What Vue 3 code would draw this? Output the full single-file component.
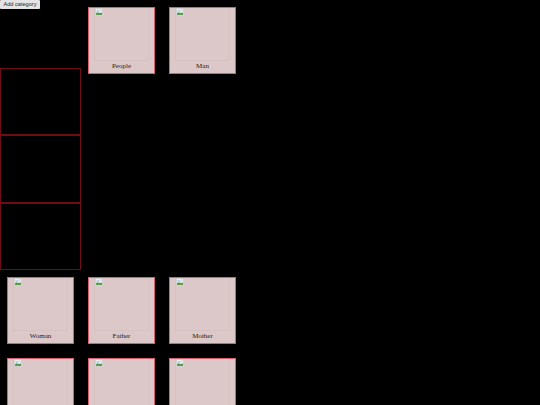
<script setup>
const sideCards = ['People', 'Man']
const rows = [
  ['Woman', 'Father', 'Mother'],
  ['', '', '']
]
</script>

<template>
  <div class="page">
    <button class="add">Add category</button>
    <div class="top">
      <div class="stack">
        <div class="empty"></div>
        <div class="empty"></div>
        <div class="empty"></div>
      </div>
      <div v-for="name in sideCards" :key="name" class="cell">
        <div class="card">
          <div class="pic">
            <svg class="broken" viewBox="0 0 16 16">
              <path d="M1 1h10l4 4v10H1z" fill="#eef1f4" stroke="#c4c6c8" stroke-width="1" />
              <path d="M11 1v4h4" fill="#fff" stroke="#c4c6c8" stroke-width="1" />
              <path d="M2 11c2-3 4-3 6-1l6-1v5H2z" fill="#5a9c4e" />
              <path d="M3 4h6v4H3z" fill="#bcd4ee" />
            </svg>
          </div>
          <span class="label">{{ name }}</span>
        </div>
      </div>
    </div>
    <div v-for="(row, r) in rows" :key="r" class="row">
      <div v-for="(name, c) in row" :key="c" class="cell">
        <div class="card">
          <div class="pic">
            <svg class="broken" viewBox="0 0 16 16">
              <path d="M1 1h10l4 4v10H1z" fill="#eef1f4" stroke="#c4c6c8" stroke-width="1" />
              <path d="M11 1v4h4" fill="#fff" stroke="#c4c6c8" stroke-width="1" />
              <path d="M2 11c2-3 4-3 6-1l6-1v5H2z" fill="#5a9c4e" />
              <path d="M3 4h6v4H3z" fill="#bcd4ee" />
            </svg>
          </div>
          <span class="label">{{ name }}</span>
        </div>
      </div>
    </div>
  </div>
</template>

<style scoped>
.page {
  position: relative;
  width: 540px;
  height: 405px;
  overflow: hidden;
  background: #000;
  font-family: "Liberation Serif", serif;
}
.add {
  position: absolute;
  left: 0;
  top: 0;
  width: 40px;
  height: 9px;
  padding: 0;
  border: 0;
  border-radius: 1px;
  background: #e4e4e4;
  color: #222;
  font-family: "Liberation Sans", sans-serif;
  font-size: 5.6px;
  line-height: 9px;
}
.top {
  display: flex;
  height: 270px;
  align-items: flex-start;
}
.stack {
  display: flex;
  flex-direction: column;
  width: 81px;
  padding-top: 67.5px;
  box-sizing: border-box;
}
.empty {
  height: 67.5px;
  box-sizing: border-box;
  border: 1px solid #6e0c18;
}
.row {
  display: flex;
  height: 81px;
}
.cell {
  width: 81px;
  height: 81px;
  padding: 7px;
  box-sizing: border-box;
  flex: none;
}
.card {
  width: 67px;
  height: 67px;
  box-sizing: border-box;
  border: 1px solid #d9606c;
  background: #dcc8c8;
  display: flex;
  flex-direction: column;
  align-items: center;
}
.pic {
  width: 55px;
  height: 53px;
  box-sizing: border-box;
  border: 1px solid #d6c2c2;
  border-top: 0;
  flex: none;
}
.broken {
  display: block;
  width: 8px;
  height: 8px;
}
.label {
  color: #222;
  font-size: 7px;
  line-height: 11px;
}
</style>
